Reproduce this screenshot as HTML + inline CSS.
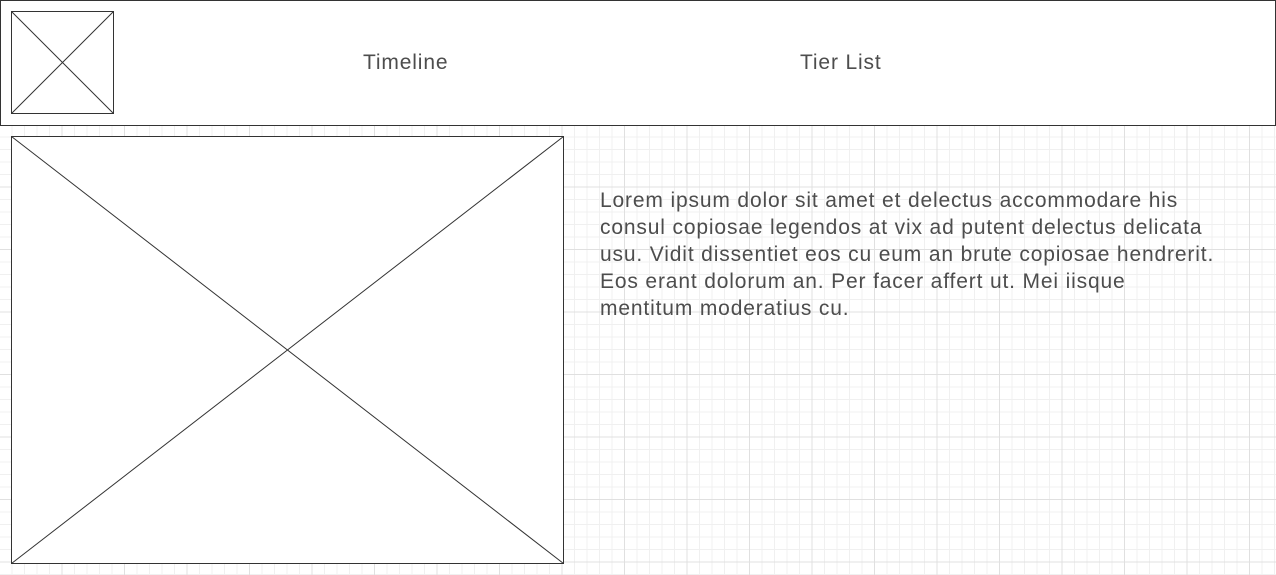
<!DOCTYPE html>
<html><head><style>
html,body{margin:0;padding:0;width:1276px;height:575px;overflow:hidden;background:#fff;font-family:"Liberation Sans",sans-serif;}
body{position:relative;
background-image:
linear-gradient(to right,#e0e0e0 1px,transparent 1px),
linear-gradient(to bottom,#e0e0e0 1px,transparent 1px),
linear-gradient(to right,#f0f0f0 1px,transparent 1px),
linear-gradient(to bottom,#f0f0f0 1px,transparent 1px);
background-size:62.5px 62.5px,62.5px 62.5px,12.5px 12.5px,12.5px 12.5px;
background-position:-1px -1px,-1px -1px,-1px -1px,-1px -1px;}
.abs{position:absolute;}
.nav{left:0;top:0;width:1274px;height:124px;border:1px solid #333;background:#fff;}
.t{color:#4d4d4d;font-size:21px;letter-spacing:0.85px;white-space:nowrap;}
</style></head><body>
<div class="abs nav"></div>
<svg class="abs" style="left:11px;top:11px" width="104" height="104"><rect x="0.5" y="0.5" width="102" height="102" fill="#fff" stroke="#333"/><path d="M0.5 0.5L102.5 102.5M102.5 0.5L0.5 102.5" stroke="#333"/></svg>
<div class="abs t" style="left:363px;top:51px">Timeline</div>
<div class="abs t" style="left:800px;top:51px">Tier List</div>
<svg class="abs" style="left:11px;top:136px" width="554" height="429"><rect x="0.5" y="0.5" width="552" height="427" fill="#fff" stroke="#333"/><path d="M0.5 0.5L552.5 427.5M552.5 0.5L0.5 427.5" stroke="#333"/></svg>
<div class="abs t" style="left:600px;top:187px;line-height:27px">Lorem ipsum dolor sit amet et delectus accommodare his<br>consul copiosae legendos at vix ad putent delectus delicata<br>usu. Vidit dissentiet eos cu eum an brute copiosae hendrerit.<br>Eos erant dolorum an. Per facer affert ut. Mei iisque<br>mentitum moderatius cu.</div>
</body></html>
